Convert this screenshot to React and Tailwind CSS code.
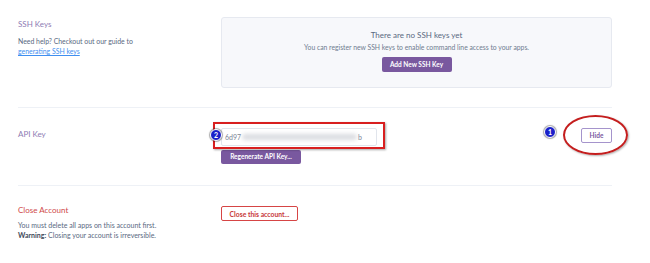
export default function App() {
  return (
    <div className="relative w-[650px] h-[263px] overflow-hidden bg-white font-['Lato',sans-serif] text-[#596981] leading-[10px]">
      <div className="ml-[18px] w-[594px]">
        {/* SSH Keys */}
        <div className="flex pt-[17px] pb-[19px] border-b border-[#eef1f6]">
          <div className="w-[203px] pt-[1px]">
            <div className="text-[8px] leading-[12px] text-[#8e7cb4]">SSH Keys</div>
            <div className="mt-[6px] text-[6.9px] leading-[10px]">Need help? Checkout out our guide to</div>
            <div className="text-[6.9px] leading-[10px]">
              <a className="text-[#3f8ff0] underline">generating SSH keys</a>
            </div>
          </div>
          <div className="flex-1">
            <div className="h-[71px] rounded-[3px] border border-[#e6e9f0] bg-[#f7f8fb] flex flex-col items-center pt-[12px]">
              <div className="text-[8px] leading-[10px] text-[#596981]">There are no SSH keys yet</div>
              <div className="mt-[3px] text-[6.8px] leading-[9px] text-[#6f7c90]">You can register new SSH keys to enable command line access to your apps.</div>
              <div className="mt-[5px] h-[15px] w-[70px] rounded-[2px] bg-[#79589f] text-white text-[6.5px] font-bold flex items-center justify-center">Add New SSH Key</div>
            </div>
          </div>
        </div>
        {/* API Key */}
        <div className="flex h-[78px] pt-[20px] border-b border-[#eef1f6]">
          <div className="w-[203px] pt-[1px]">
            <div className="text-[8px] leading-[10px] text-[#8e7cb4]">API Key</div>
          </div>
          <div className="flex-1 flex justify-between">
            <div className="flex flex-col">
              <div className="h-[18px] w-[156px] rounded-[2px] border border-[#e1e5ec] bg-white flex items-center pl-[3px] pr-[14px] text-[7px] text-[#7a8596]">
                <span>6d97</span>
                <span className="mx-[1px] h-[6px] flex-1 rounded-full bg-[#d9dbe0] blur-[2px]"></span>
                <span>b</span>
              </div>
              <div className="mt-[4px] h-[14px] w-[80px] rounded-[2px] bg-[#79589f] text-white text-[6.5px] font-bold flex items-center justify-center">Regenerate API Key...</div>
            </div>
            <div className="h-[15px] w-[31px] rounded-[2px] border border-[#a594cc] bg-white text-[#79589f] text-[6.5px] font-bold flex items-center justify-center">Hide</div>
          </div>
        </div>
        {/* Close Account */}
        <div className="flex pt-[19px]">
          <div className="w-[203px]">
            <div className="text-[8px] leading-[10px] text-[#cf4a4a]">Close Account</div>
            <div className="mt-[5px] text-[7px] leading-[10px]">You must delete all apps on this account first.</div>
            <div className="text-[7px] leading-[10px]"><b className="text-[#3f4a5a]">Warning:</b> Closing your account is irreversible.</div>
          </div>
          <div className="flex-1 pt-[1px]">
            <div className="h-[15px] w-[77px] rounded-[2px] border border-[#d64545] bg-white text-[#c73838] text-[6.8px] font-bold flex items-center justify-center">Close this account...</div>
          </div>
        </div>
      </div>

      {/* annotations */}
      <div className="absolute left-[213px] top-[122px] w-[172px] h-[27px] border-2 border-[#d81f1f] shadow-[1px_1px_2px_rgba(0,0,0,0.35)]"></div>
      <div className="absolute left-[563px] top-[115px] w-[65px] h-[40px] rounded-[50%] border-2 border-[#c41e1e] shadow-[1px_1px_2px_rgba(0,0,0,0.3)]"></div>
      <div className="absolute left-[210px] top-[129px] w-[12px] h-[12px] rounded-full bg-[#1b21c9] border-[1.5px] border-white shadow-[0_0_1px_1px_rgba(0,0,0,0.35)] flex items-center justify-center text-white text-[7px] font-bold leading-none">2</div>
      <div className="absolute left-[544px] top-[126px] w-[12px] h-[12px] rounded-full bg-[#1b21c9] border-[1.5px] border-white shadow-[0_0_1px_1px_rgba(0,0,0,0.35)] flex items-center justify-center text-white text-[7px] font-bold leading-none">1</div>
    </div>
  );
}
